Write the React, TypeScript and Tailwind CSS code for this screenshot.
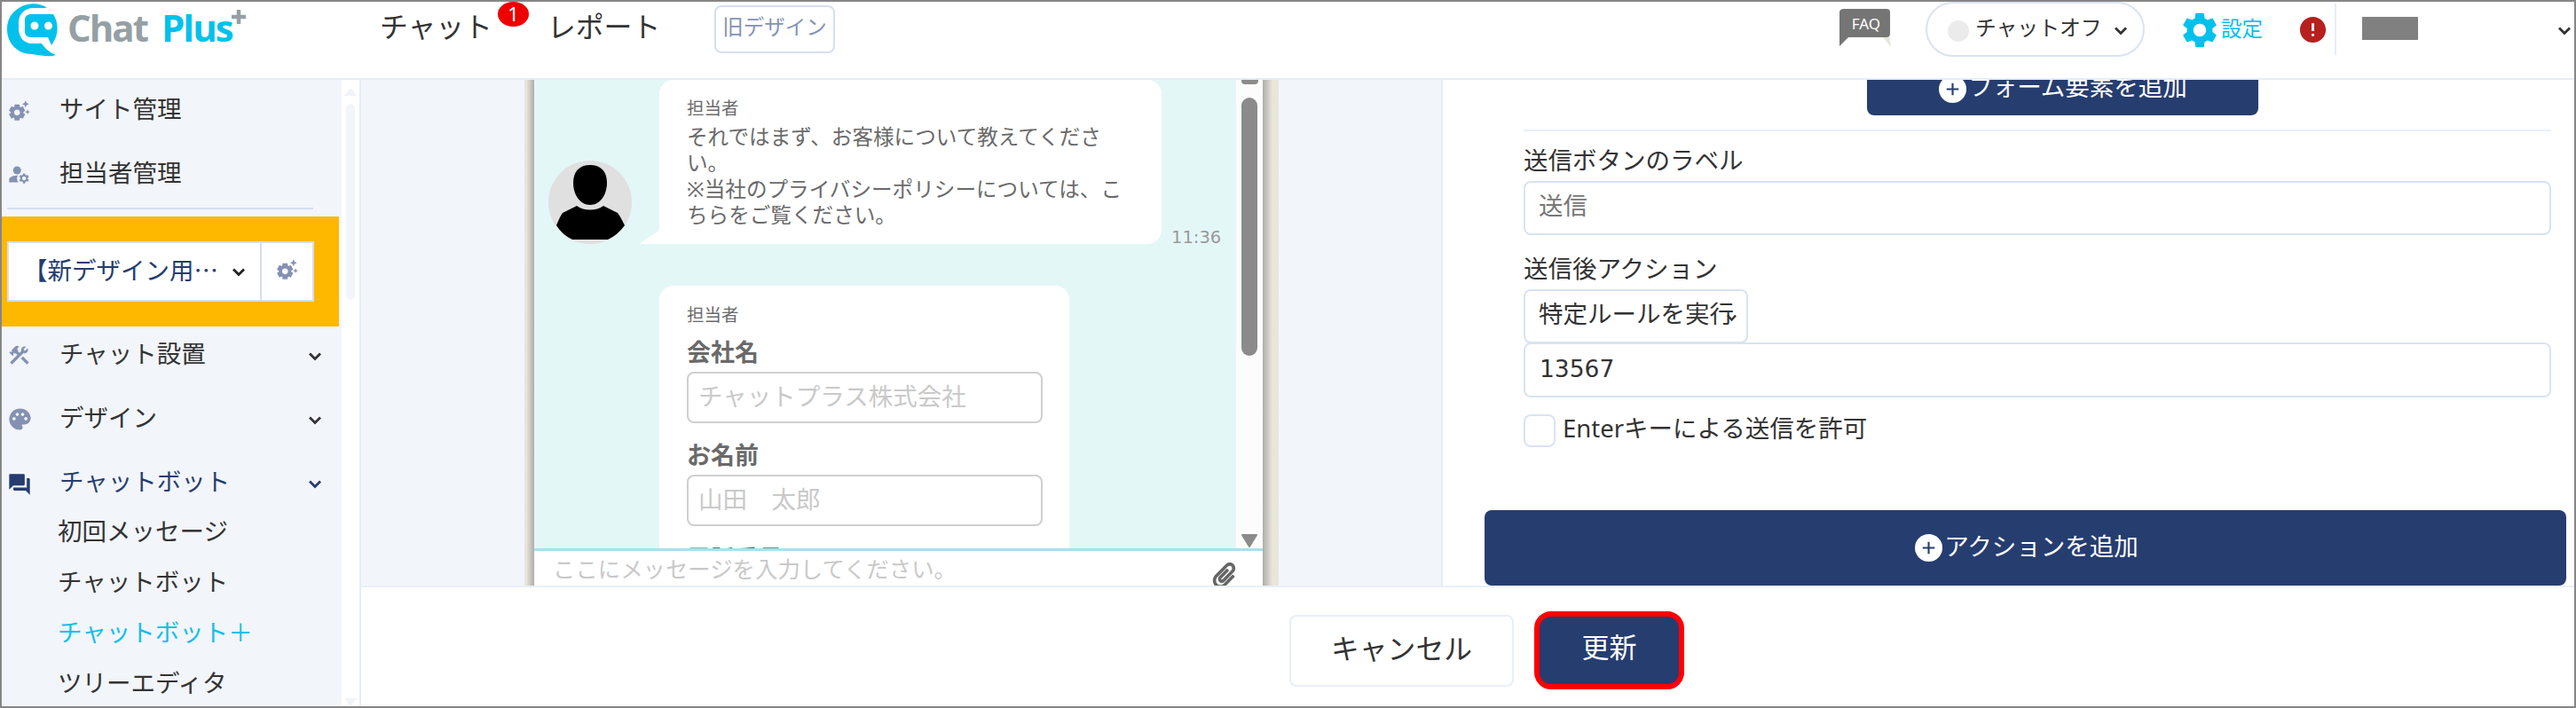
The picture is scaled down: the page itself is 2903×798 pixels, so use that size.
import type { ReactNode } from "react";
import {
  MdConstruction,
  MdError,
  MdForum,
  MdManageAccounts,
  MdPalette,
  MdSettings,
  MdSettingsSuggest,
} from "react-icons/md";
import { FaPaperclip } from "react-icons/fa";

type MenuItem = {
  label: string;
  icon: ReactNode;
  expandable?: boolean;
  active?: boolean;
};

const siteMenu: MenuItem[] = [
  { label: "サイト管理", icon: <MdSettingsSuggest size={27} /> },
  { label: "担当者管理", icon: <MdManageAccounts size={27} /> },
];

const chatMenu: MenuItem[] = [
  { label: "チャット設置", icon: <MdConstruction size={27} />, expandable: true },
  { label: "デザイン", icon: <MdPalette size={29} />, expandable: true },
  { label: "チャットボット", icon: <MdForum size={28} />, expandable: true, active: true },
];

const botMenu = ["初回メッセージ", "チャットボット", "チャットボット＋", "ツリーエディタ"];

function Chevron({ className = "" }: { className?: string }) {
  return (
    <svg className={`shrink-0 ${className}`} width="14" height="10" viewBox="0 0 14 10" fill="none" stroke="currentColor" strokeWidth="2.8">
      <path d="M1 1.5 L7 7.5 L13 1.5" />
    </svg>
  );
}

function PlusCircle() {
  return (
    <svg className="shrink-0" width="31" height="31" viewBox="0 0 32 32">
      <circle cx="16" cy="16" r="16" fill="#fff" />
      <path d="M9 16 H23 M16 9 V23" stroke="#263d70" strokeWidth="2.2" />
    </svg>
  );
}

function Logo() {
  return (
    <div className="flex h-[62px] w-[423px] shrink-0 items-start pl-[6px]">
      <svg className="mt-[2px] shrink-0" width="57" height="60" viewBox="0 0 57 60">
        <path
          d="M45 5 C37 -1 24 -1 15 4 C4 10 0 19 0 29 C0 45 12 57 28 57 C38 58 47 61 55 58 C49 56 43 51 39 45 H27 C18 44 14 38 13 30 V20 C14 11 20 6 28 5 Z"
          fill="#00c1ec"
        />
        <path
          d="M27 12 H52 C58 21 58 33 53 42 L50 47 L46 38 H27 C22 38 20 35 20 31 V19 C20 14 23 12 27 12 Z"
          fill="#00c1ec"
        />
        <circle cx="31" cy="25" r="4.5" fill="#fff" />
        <circle cx="46.5" cy="25" r="4.5" fill="#fff" />
      </svg>
      <div className="ml-[11px] flex font-['Open_Sans','Noto_Sans',sans-serif] text-[42px] leading-[58px] font-bold tracking-[-2px]">
        <span className="w-[106px] text-[#95a0a4]">Chat</span>
        <span className="w-[79px] text-[#00c1ec]">Plus</span>
        <svg className="mt-[9px]" width="16" height="16" viewBox="0 0 16 16">
          <path d="M0 8 H16 M8 0 V16" stroke="#95a0a4" strokeWidth="4.5" />
        </svg>
      </div>
    </div>
  );
}

function Header() {
  return (
    <header className="flex h-[88px] shrink-0 items-start border-b-2 border-[#e6edf7]">
      <Logo />
      <nav className="flex shrink-0 text-[31.8px] leading-[55px]">
        <div className="relative ml-[3px] w-[189px]">
          チャット
          <span className="absolute top-0 left-[133px] flex h-[28px] w-[35px] items-center justify-center rounded-[50%] bg-[#ee0000] pb-[2px] text-[22px] text-white">
            1
          </span>
        </div>
        <div className="w-[188px]">レポート</div>
      </nav>
      <button className="mt-1 h-[54px] w-[136px] shrink-0 rounded-lg border-2 border-[#d5dff0] pb-[5px] text-[23.5px] whitespace-nowrap text-[#8493b5]">
        旧デザイン
      </button>

      <div className="ml-auto flex h-[62px] items-center">
        <svg className="mr-[39px] -mt-[4px]" width="58" height="44" viewBox="0 0 58 44">
          <path d="M48 32 H56 L58 44 Z" fill="#e9e5dd" />
          <path d="M5 1 H53 Q57 1 57 5 V29 Q57 33 53 33 H10 L0 43 V5 Q0 1 5 1 Z" fill="#757575" />
          <text x="30" y="24" textAnchor="middle" fontSize="17" fill="#fff" fontFamily="Noto Sans, sans-serif">
            FAQ
          </text>
        </svg>
        <div className="flex h-[62px] w-[247px] items-center rounded-[31px] border-2 border-[#d9e3f3] pl-[23px]">
          <span className="mt-[3px] h-[24px] w-[24px] rounded-full bg-[#ebebeb]" />
          <span className="ml-[7px] pb-[3px] text-[23.8px]">チャットオフ</span>
          <Chevron className="mt-[4px] ml-auto mr-[18px]" />
        </div>
        <div className="ml-[38px] flex w-[134px] items-center text-[#00c1ec]">
          <MdSettings size={48} className="mt-[2px] shrink-0" />
          <span className="text-[23.5px]">設定</span>
        </div>
        <MdError size={35} className="shrink-0 text-[#b7201f]" />
        <span className="ml-[7px] h-[58px] w-[2px] bg-[#e6edf7]" />
        <span className="-mt-[3px] ml-[29px] h-[26px] w-[63px] bg-[#808080]" />
        <Chevron className="mt-[4px] mr-[4px] ml-[158px]" />
      </div>
    </header>
  );
}

function MenuRow({ item }: { item: MenuItem }) {
  return (
    <li className={`flex h-[72px] items-center pl-[6px] text-[27.5px] ${item.active ? "text-[#263d70]" : ""}`}>
      <span className={`w-[59px] ${item.active ? "mt-[5px]" : "mt-[3px] text-[#8491b3]"}`}>{item.icon}</span>
      <span>{item.label}</span>
      {item.expandable && <Chevron className="mt-[5px] mr-[23px] ml-auto" />}
    </li>
  );
}

function Sidebar() {
  return (
    <aside className="flex w-[405px] shrink-0 border-r-2 border-[#e6edf7]">
      <div className="h-full w-[383px] overflow-hidden bg-[#f2f5fa]">
        <ul className="-mt-[3px]">
          {siteMenu.map((item) => (
            <MenuRow key={item.label} item={item} />
          ))}
        </ul>
        <div className="mt-[3px] ml-[6px] h-[2px] w-[345px] bg-[#d3deef]" />
        <div className="mt-[8px] h-[124px] w-[380px] bg-[#ffb800] pt-[28px] pl-[6px]">
          <div className="flex h-[68px] w-[346px] border-2 border-[#d3deef] bg-white">
            <div className="flex w-[285px] items-center border-r-2 border-[#d3deef] text-[27.5px] whitespace-nowrap text-[#263d70]">
              <span className="ml-[16px] pb-[4px]">
                【新デザイン用<span className="font-['Noto_Sans_CJK_JP',sans-serif]">⋯</span>
              </span>
              <Chevron className="mt-[2px] mr-[17px] ml-auto text-[#222]" />
            </div>
            <MdSettingsSuggest size={27} className="mt-[16px] ml-[15px] text-[#8491b3]" />
          </div>
        </div>
        <ul className="-mt-[5px]">
          {chatMenu.map((item) => (
            <MenuRow key={item.label} item={item} />
          ))}
        </ul>
        <ul className="-mt-[8px] pl-[63px] text-[27.5px] leading-[56px]">
          {botMenu.map((label) => (
            <li key={label} className={`h-[57px] ${label === "チャットボット＋" ? "text-[#12bfe9]" : ""}`}>
              {label}
            </li>
          ))}
        </ul>
      </div>
      <div className="flex w-[20px] flex-col items-center bg-white">
        <svg className="mt-[9px]" width="14" height="9" viewBox="0 0 14 9">
          <path d="M7 0 L14 9 H0 Z" fill="#f0f3f9" />
        </svg>
        <div className="mt-[9px] h-[221px] w-[10px] rounded-full bg-[#f2f5fa]" />
        <svg className="mt-auto" width="14" height="9" viewBox="0 0 14 9">
          <path d="M0 0 H14 L7 9 Z" fill="#f0f3f9" />
        </svg>
      </div>
    </aside>
  );
}

function Avatar() {
  return (
    <svg className="shrink-0" width="94" height="94" viewBox="0 0 94 94">
      <circle cx="47" cy="47" r="47" fill="#e0e0e0" />
      <path d="M47 5 C59 5 66 12 66 25 C66 39 58 50 47 50 C36 50 28 39 28 25 C28 12 35 5 47 5 Z" fill="#000" />
      <path d="M32 51 C40 57 54 57 62 51 L78 59 Q80 61 86 73 Q78 84 67 89 H27 Q16 84 9 73 Q14 61 16 59 Z" fill="#000" />
    </svg>
  );
}

function ChatField({ label, placeholder }: { label: string; placeholder: string }) {
  return (
    <div className="mb-[16px]">
      <div className="h-[42px] text-[27px] leading-[39px] font-bold">{label}</div>
      <div className="h-[58px] w-[401px] rounded-lg border-2 border-[#cfcfcf] pl-[11px] text-[27.5px] leading-[51px] text-[#c9c9c9]">
        {placeholder}
      </div>
    </div>
  );
}

function ChatPreview() {
  return (
    <section className="flex w-[850px] shrink-0">
      <div className="w-[11px] bg-linear-to-r from-[#e8e5dd] from-20% to-[#aeada8]" />
      <div className="flex w-[821px] flex-col bg-white text-[#6a6a6a]">
        <div className="flex h-[528px] overflow-hidden bg-[#e4f7f7]">
          <div className="w-[791px]">
            <div className="flex h-[185px] items-end">
              <div className="ml-[16px]">
                <Avatar />
              </div>
              <svg className="ml-[8px] shrink-0" width="23" height="15" viewBox="0 0 23 15">
                <path d="M23 0 V15 H0 Z" fill="#fff" />
              </svg>
              <div className="h-[185px] w-[566px] shrink-0 rounded-2xl rounded-bl-none bg-white pt-[18px] pl-[31px]">
                <div className="h-[32px] text-[19.5px] leading-[28px]">担当者</div>
                <p className="text-[23.6px] leading-[29.4px] whitespace-nowrap">
                  それではまず、お客様について教えてくださ
                  <br />
                  い。
                  <br />
                  ※当社のプライバシーポリシーについては、こ
                  <br />
                  ちらをご覧ください。
                </p>
              </div>
              <span className="ml-[11px] font-['DejaVu_Sans',sans-serif] text-[19.5px] leading-[14px] text-[#999]">11:36</span>
            </div>
            <div className="mt-[47px] ml-[141px] h-[320px] w-[462px] rounded-t-2xl bg-white pt-[18px] pl-[31px]">
              <div className="h-[37px] text-[19.5px] leading-[29px]">担当者</div>
              <ChatField label="会社名" placeholder="チャットプラス株式会社" />
              <ChatField label="お名前" placeholder="山田　太郎" />
              <div className="text-[27px] leading-[42px] font-bold">電話番号</div>
            </div>
          </div>
          <div className="flex w-[30px] flex-col items-center bg-[#fcfcfc]">
            <div className="h-[5px] w-[19px] rounded-b-sm bg-[#8b8b8b]" />
            <div className="mt-[15px] h-[291px] w-[18px] rounded-full bg-[#8b8b8b]" />
            <svg className="mt-auto" width="20" height="16" viewBox="0 0 20 16">
              <path d="M2 1 H18 L10 14 Z" fill="#8b8b8b" stroke="#8b8b8b" strokeWidth="2" strokeLinejoin="round" />
            </svg>
          </div>
        </div>
        <div className="flex h-[42px] items-start border-t-[3px] border-[#a3e2ef] pl-[21px]">
          <span className="text-[25.4px] leading-[41px] text-[#c9c9c9]">ここにメッセージを入力してください。</span>
          <FaPaperclip size={29} className="mt-[13px] mr-[29px] ml-auto shrink-0 text-[#666]" />
        </div>
      </div>
      <div className="w-[18px] bg-linear-to-r from-[#aeada8] to-[#e8e5dd] to-60%" />
    </section>
  );
}

function AddButton({ className, children }: { className: string; children: ReactNode }) {
  return (
    <button className={`flex items-center justify-center gap-[2px] rounded-lg bg-[#263d70] text-[27.5px] text-white ${className}`}>
      <PlusCircle />
      <span className="pb-[4px]">{children}</span>
    </button>
  );
}

function ActionForm() {
  return (
    <section className="ml-auto flex h-full w-[1277px] shrink-0 flex-col border-l-2 border-[#e6edf7] bg-white pr-[9px] pl-[47px] text-[27.5px]">
      <div className="flex h-[485px] shrink-0 flex-col pr-[17px] pl-[44px]">
        <AddButton className="-mt-[20px] h-[60px] w-[441px] shrink-0 translate-x-[28px] self-center pl-[2px]">フォーム要素を追加</AddButton>
        <div className="mt-[16px] h-[2px] shrink-0 bg-[#e9eff8]" />
        <label className="mt-[13px] h-[43px] shrink-0 leading-[39px]">送信ボタンのラベル</label>
        <div className="h-[61px] shrink-0 rounded-lg border-2 border-[#d9e3f1] pl-[15px] leading-[52px] text-[#777]">送信</div>
        <label className="mt-[18px] h-[43px] shrink-0 leading-[39px]">送信後アクション</label>
        <div className="relative h-[61px] w-[253px] shrink-0 rounded-lg border-2 border-[#d9e3f1] pl-[15px] leading-[52px] whitespace-nowrap">
          特定ルールを実行
          <svg className="absolute top-[26px] right-[11px]" width="11" height="9" viewBox="0 0 11 9" fill="none" stroke="#333" strokeWidth="2.4">
            <path d="M1 1.5 L5.5 6.5 L10 1.5" />
          </svg>
        </div>
        <div className="-mt-[1px] h-[62px] shrink-0 rounded-lg border-2 border-[#d9e3f1] pl-[16px] font-['DejaVu_Sans',sans-serif] text-[26.5px] leading-[55px]">
          13567
        </div>
        <div className="mt-[19px] flex shrink-0">
          <span className="h-[37px] w-[36px] rounded-lg border-2 border-[#d9e3f5]" />
          <span className="ml-[8px] leading-[31px]">Enterキーによる送信を許可</span>
        </div>
      </div>
      <AddButton className="h-[85px] w-full shrink-0 pl-[3px]">アクションを追加</AddButton>
    </section>
  );
}

function Footer() {
  return (
    <footer className="flex h-[136px] shrink-0 items-start border-t-2 border-[#e9eff8] bg-white">
      <button className="mt-[31px] ml-[1046px] h-[81px] w-[253px] rounded-lg border-2 border-[#e9eff9] pb-[6px] text-[31.8px]">キャンセル</button>
      <button className="mt-[27px] ml-[23px] h-[88px] w-[169px] rounded-[19px] border-[6px] border-[#ff0000] bg-[#263d70] pb-[7px] text-[31px] text-white">
        更新
      </button>
    </footer>
  );
}

export default function App() {
  return (
    <div className="flex h-[798px] w-[2903px] flex-col overflow-hidden border-2 border-[#868686] bg-white font-['Noto_Sans','Noto_Sans_CJK_JP',sans-serif] text-[#333]">
      <Header />
      <div className="flex min-h-0 flex-1">
        <Sidebar />
        <main className="flex min-w-0 flex-1 flex-col">
          <div className="flex h-[570px] shrink-0 overflow-hidden bg-[#f2f5fa] pl-[184px]">
            <ChatPreview />
            <ActionForm />
          </div>
          <Footer />
        </main>
      </div>
    </div>
  );
}
